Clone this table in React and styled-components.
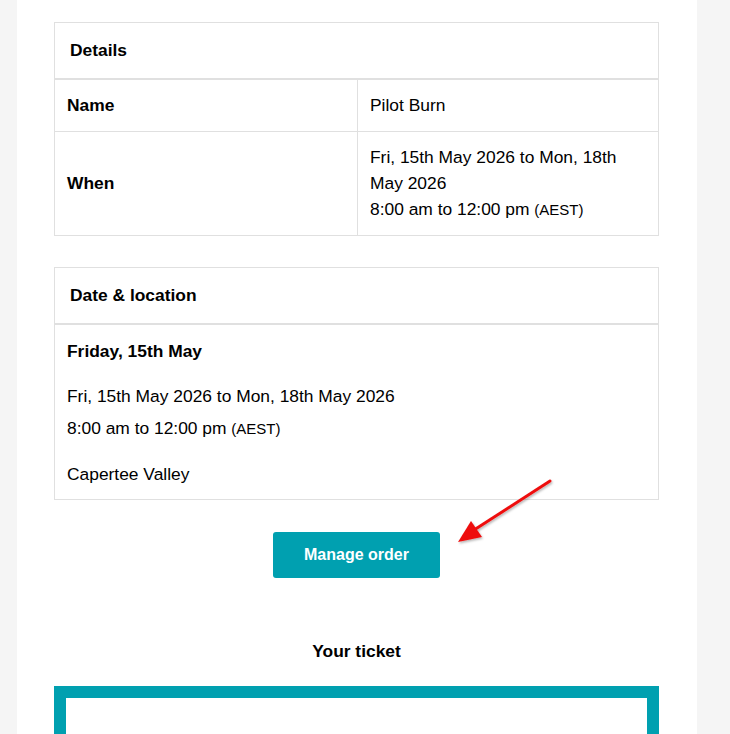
import React from "react";
import styled, { createGlobalStyle } from "styled-components";

const GlobalStyle = createGlobalStyle`
  html, body {
    margin: 0;
    padding: 0;
    background: #f5f5f5;
    font-family: "Liberation Sans", Arial, sans-serif;
    color: #000;
  }
`;

const Page = styled.div`
  position: relative;
  width: 730px;
  height: 734px;
  overflow: hidden;
`;

const Column = styled.div`
  width: 680px;
  margin-left: 17px;
  min-height: 734px;
  background: #fff;
  padding: 22px 38px 0 37px;
  box-sizing: border-box;
  display: flex;
  flex-direction: column;
`;

const Card = styled.div`
  border: 1px solid #e0e0e0;
  margin-bottom: ${(p) => p.$gap}px;
`;

const CardHeader = styled.div`
  padding: 15px 15px;
  line-height: 25px;
  font-size: 17.4px;
  font-weight: bold;
  border-bottom: 2px solid #e0e0e0;
`;

const Row = styled.div`
  display: grid;
  grid-template-columns: 302px 1fr;
  border-top: ${(p) => (p.$first ? "none" : "1px solid #e0e0e0")};
`;

const Cell = styled.div`
  padding: 12px 12px 13px;
  font-size: 17.4px;
  line-height: 26px;
  font-weight: ${(p) => (p.$label ? "bold" : "normal")};
  display: flex;
  flex-direction: column;
  justify-content: center;
  border-left: ${(p) => (p.$label ? "none" : "1px solid #e0e0e0")};
`;

const Zone = styled.span`
  font-size: 15px;
  line-height: 1;
`;

const Body = styled.div`
  padding: 13px 12px 12px;
  font-size: 17.4px;
  line-height: 26px;
`;

const Line = styled.div`
  margin-top: ${(p) => p.$gap || 0}px;
  font-weight: ${(p) => (p.$bold ? "bold" : "normal")};
`;

const ButtonWrap = styled.div`
  display: flex;
  justify-content: center;
`;

const Button = styled.a`
  display: inline-flex;
  align-items: center;
  justify-content: center;
  height: 46px;
  width: 167px;
  background: #00a0b0;
  border-radius: 3px;
  color: #fff;
  font-weight: bold;
  font-size: 16px;
  text-decoration: none;
`;

const SectionTitle = styled.div`
  text-align: center;
  font-weight: bold;
  font-size: 17.4px;
  line-height: 24px;
  margin-top: 61px;
`;

const Ticket = styled.div`
  margin-top: 23px;
  border: 12px solid #00a0b0;
  height: 200px;
  background: #fff;
`;

const Arrow = styled.svg`
  position: absolute;
  left: 0;
  top: 0;
  pointer-events: none;
`;

export default function App() {
  return (
    <>
      <GlobalStyle />
      <Page>
        <Column>
          <Card $gap={31}>
            <CardHeader>Details</CardHeader>
            <Row $first>
              <Cell $label>Name</Cell>
              <Cell>Pilot Burn</Cell>
            </Row>
            <Row>
              <Cell $label>When</Cell>
              <Cell>
                <div>Fri, 15th May 2026 to Mon, 18th May 2026</div>
                <div>
                  8:00 am to 12:00 pm <Zone>(AEST)</Zone>
                </div>
              </Cell>
            </Row>
          </Card>

          <Card $gap={32}>
            <CardHeader>Date &amp; location</CardHeader>
            <Body>
              <Line $bold>Friday, 15th May</Line>
              <Line $gap={19}>Fri, 15th May 2026 to Mon, 18th May 2026</Line>
              <Line $gap={6}>
                8:00 am to 12:00 pm <Zone>(AEST)</Zone>
              </Line>
              <Line $gap={20}>Capertee Valley</Line>
            </Body>
          </Card>

          <ButtonWrap>
            <Button href="#">Manage order</Button>
          </ButtonWrap>

          <SectionTitle>Your ticket</SectionTitle>
          <Ticket />
        </Column>

        <Arrow width="730" height="734" viewBox="0 0 730 734">
          <defs>
            <filter id="sh" x="-20%" y="-20%" width="140%" height="140%">
              <feDropShadow dx="1" dy="1.5" stdDeviation="1.2" floodColor="#000" floodOpacity="0.3" />
            </filter>
          </defs>
          <g filter="url(#sh)">
            <line x1="550" y1="481" x2="474" y2="530" stroke="#ee1111" strokeWidth="3" strokeLinecap="round" />
            <polygon points="458,542 471,521 482,537" fill="#ee1111" />
          </g>
        </Arrow>
      </Page>
    </>
  );
}
